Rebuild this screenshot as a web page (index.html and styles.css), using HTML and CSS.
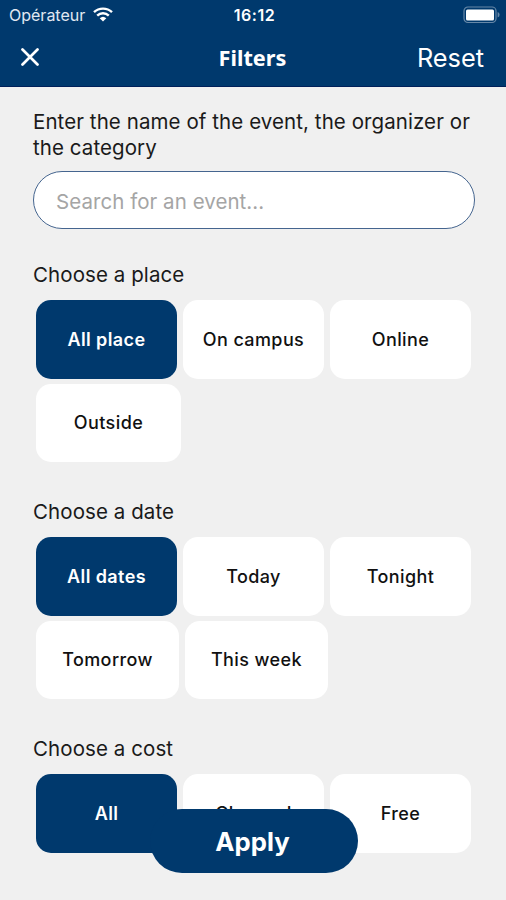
FILE: index.html
```html
<!DOCTYPE html>
<html lang="en">
<head>
    <meta charset="UTF-8">
    <meta name="viewport" content="width=device-width, initial-scale=1.0">
    <title>Filters</title>
    <link rel="stylesheet" href="styles.css">
</head>
<body>
    <header class="header">
        <div class="status-bar">
            <div class="carrier">
                <span>Opérateur</span>
                <svg class="wifi" width="20" height="16" viewBox="0 0 20 16">
                    <path d="M1 5.2a13 13 0 0 1 18 0" />
                    <path d="M4.2 8.6a8.3 8.3 0 0 1 11.6 0" />
                    <path class="wifi-dot" d="M6.7 11.2a4.8 4.8 0 0 1 6.6 0L10 14.6z" />
                </svg>
            </div>
            <span class="time">16:12</span>
            <svg class="battery" width="37" height="18" viewBox="0 0 37 18">
                <rect class="battery-case" x="1" y="1" width="32" height="15.5" rx="4" />
                <rect class="battery-level" x="3" y="3.5" width="28" height="11" rx="1.5" />
                <path class="battery-tip" d="M34.6 6v5.5q2-.8 2-2.75T34.6 6z" />
            </svg>
        </div>
        <div class="nav-bar">
            <button class="close-btn" aria-label="Close">
                <svg width="18" height="18" viewBox="0 0 18 18">
                    <path d="M1.5 1.5l15 15M16.5 1.5l-15 15" />
                </svg>
            </button>
            <h1 class="title">Filters</h1>
            <button class="reset-btn">Reset</button>
        </div>
    </header>

    <main class="content">
        <section class="search-section">
            <label class="section-label" for="search">Enter the name of the event, the organizer or the category</label>
            <input class="search-input" type="text" id="search" placeholder="Search for an event...">
        </section>

        <section class="filter-section">
            <h2 class="section-label">Choose a place</h2>
            <div class="options">
                <button class="option active">All place</button>
                <button class="option">On campus</button>
                <button class="option">Online</button>
                <button class="option outside">Outside</button>
            </div>
        </section>

        <section class="filter-section">
            <h2 class="section-label">Choose a date</h2>
            <div class="options">
                <button class="option active">All dates</button>
                <button class="option">Today</button>
                <button class="option">Tonight</button>
                <button class="option wide">Tomorrow</button>
                <button class="option wide">This week</button>
            </div>
        </section>

        <section class="filter-section">
            <h2 class="section-label">Choose a cost</h2>
            <div class="options">
                <button class="option active">All</button>
                <button class="option">Charged</button>
                <button class="option">Free</button>
            </div>
        </section>
    </main>

    <button class="apply-btn">Apply</button>
</body>
</html>
```

FILE: styles.css
```css
* {
    margin: 0;
    padding: 0;
    box-sizing: border-box;
}

body {
    font-family: Inter, "Liberation Sans", sans-serif;
    background: #f0f0f0;
    color: #1a1a1a;
    height: 900px;
    overflow: hidden;
}

button {
    border: none;
    font-family: inherit;
    cursor: pointer;
}

.header {
    height: 87px;
    background: #00396d;
    border-bottom: 1px solid #00205a;
    color: white;
}

.status-bar {
    display: grid;
    grid-template-columns: 1fr auto 1fr;
    align-items: center;
    height: 29px;
    padding: 0 6px 0 9px;
}

.carrier {
    display: flex;
    align-items: center;
    gap: 8px;
    font-size: 16px;
    color: #e0e8f2;
}

.wifi {
    fill: none;
    stroke: white;
    stroke-width: 2.4;
}

.wifi-dot {
    fill: white;
    stroke: none;
}

.time {
    font-size: 16px;
    font-weight: 600;
    letter-spacing: 0.5px;
}

.battery {
    justify-self: end;
}

.battery-case {
    fill: none;
    stroke: #6688a8;
    stroke-width: 1.2;
}

.battery-level {
    fill: white;
}

.battery-tip {
    fill: #6688a8;
}

.nav-bar {
    display: grid;
    grid-template-columns: 1fr auto 1fr;
    align-items: center;
    height: 56px;
    padding: 0 22px 0 21px;
}

.close-btn {
    display: flex;
    justify-self: start;
    background: none;
}

.close-btn svg {
    stroke: white;
    stroke-width: 2.7;
    stroke-linecap: round;
}

.title {
    font-family: "Noto Sans", sans-serif;
    font-size: 21.7px;
    font-weight: 700;
}

.reset-btn {
    justify-self: end;
    background: none;
    color: white;
    font-size: 25.3px;
}

.content {
    padding: 22px 31px 0 33px;
}

.section-label {
    display: block;
    font-size: 20.5px;
    font-weight: 400;
    line-height: 26px;
    letter-spacing: 0.08px;
}

.search-input {
    display: block;
    width: 100%;
    height: 58px;
    margin-top: 10px;
    padding: 2px 22px 0;
    border: 1.5px solid #45658f;
    border-radius: 29px;
    background: white;
    font-family: inherit;
    font-size: 20.5px;
    letter-spacing: 0.05px;
    outline: none;
}

.search-input::placeholder {
    color: #a5a5a5;
}

.search-section {
    height: 153px;
}

.filter-section {
    height: 237px;
}

.filter-section:last-child {
    height: auto;
}

.options {
    display: flex;
    flex-wrap: wrap;
    gap: 5px 6px;
    padding: 12px 0 0 3px;
}

.option {
    width: 141px;
    height: 78.5px;
    border-radius: 15px;
    background: white;
    color: #111;
    font-size: 18px;
    font-weight: 500;
    letter-spacing: 0.4px;
}

.option.active {
    background: #00396d;
    color: white;
    font-weight: 600;
}

.option.outside {
    width: 145px;
}

.option.wide {
    width: 143px;
}

.apply-btn {
    position: absolute;
    left: 150px;
    top: 809px;
    width: 208px;
    height: 64px;
    padding-right: 3px;
    border-radius: 32px;
    background: #00396d;
    color: white;
    font-size: 25.7px;
    font-weight: 700;
}
```
